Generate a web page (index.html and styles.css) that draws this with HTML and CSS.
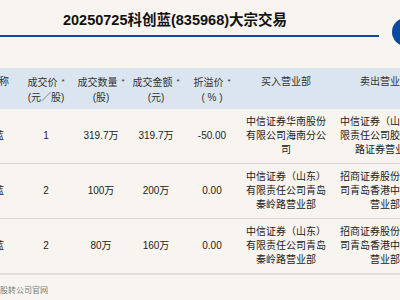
FILE: index.html
```html
<!DOCTYPE html>
<html lang="zh-CN">
<head>
    <meta charset="UTF-8">
    <meta name="viewport" content="width=device-width, initial-scale=1.0">
    <title>科创蓝大宗交易</title>
    <link rel="stylesheet" href="styles.css">
</head>
<body>
    <div class="page">
        <div class="top">
            <div class="title-wrap">
                <h1 class="title">20250725科创蓝(835968)大宗交易</h1>
            </div>
            <div class="badge"></div>
        </div>

        <table class="deals">
            <colgroup>
                <col class="c-name">
                <col class="c-num">
                <col class="c-num2">
                <col class="c-num">
                <col class="c-num">
                <col class="c-buy">
                <col class="c-sell">
            </colgroup>
            <thead>
                <tr>
                    <th>证券简称</th>
                    <th>成交价<span class="star">*</span><br>(元／股)</th>
                    <th>成交数量<span class="star">*</span><br>(股)</th>
                    <th>成交金额<span class="star">*</span><br>(元)</th>
                    <th>折溢价<span class="star">*</span><br>( % )</th>
                    <th>买入营业部</th>
                    <th>卖出营业部</th>
                </tr>
            </thead>
            <tbody>
                <tr>
                    <td>科创蓝</td>
                    <td>1</td>
                    <td>319.7万</td>
                    <td>319.7万</td>
                    <td>-50.00</td>
                    <td>中信证券华南股份有限公司海南分公司</td>
                    <td>中信证券（山东）有限责任公司胶州福州路证券营业部</td>
                </tr>
                <tr>
                    <td>科创蓝</td>
                    <td>2</td>
                    <td>100万</td>
                    <td>200万</td>
                    <td>0.00</td>
                    <td>中信证券（山东）有限责任公司青岛秦岭路营业部</td>
                    <td>招商证券股份有限公司青岛香港中路证券营业部</td>
                </tr>
                <tr>
                    <td>科创蓝</td>
                    <td>2</td>
                    <td>80万</td>
                    <td>160万</td>
                    <td>0.00</td>
                    <td>中信证券（山东）有限责任公司青岛秦岭路营业部</td>
                    <td>招商证券股份有限公司青岛香港中路证券营业部</td>
                </tr>
            </tbody>
        </table>

        <p class="source">来源：全国股转公司官网</p>
    </div>
</body>
</html>
```

FILE: styles.css
```css
html, body {
    margin: 0;
    padding: 0;
    overflow: hidden;
    background-color: #f8f5f0;
}
body {
    font-family: "Liberation Sans", "Noto Sans CJK SC", sans-serif;
    color: #222;
}
.page {
    margin-left: -40px;
    width: 480px;
}
.top {
    display: flex;
    align-items: flex-start;
}
.title-wrap {
    width: 419px;
    box-sizing: border-box;
    padding: 10px 0 5px 11px;
    border-bottom: 2px solid #0b4a9e;
}
.title {
    margin: 0;
    font-size: 14.5px;
    line-height: 20px;
    font-weight: bold;
    text-align: center;
    color: #111;
}
.badge {
    width: 28px;
    height: 28px;
    margin: 18px 0 0 13px;
    border-radius: 50%;
    background-color: #0b4a9e;
}
.deals {
    margin-top: 22px;
    border-collapse: collapse;
    table-layout: fixed;
    width: 478px;
    font-size: 10px;
    border-bottom: 2px solid #e2ded8;
}
.c-name { width: 58px; }
.c-num { width: 56px; }
.c-num2 { width: 54px; }
.c-buy { width: 92px; }
.c-sell { width: 106px; }
.deals th {
    background-color: #dbe5ef;
    font-weight: normal;
    color: #333;
    line-height: 15px;
    padding: 6px 2px 4px;
    vertical-align: top;
    text-align: center;
}
.star {
    font-size: 8px;
    vertical-align: 2px;
    margin-left: 4px;
}
.deals td {
    text-align: center;
    vertical-align: middle;
    line-height: 14px;
    padding: 6px 4px;
    border-bottom: 1px solid #d8d4ce;
}
.deals tr:last-child td {
    border-bottom: none;
}
.source {
    margin: 10px 0 0;
    font-size: 8px;
    line-height: 12px;
    color: #777;
}
```
